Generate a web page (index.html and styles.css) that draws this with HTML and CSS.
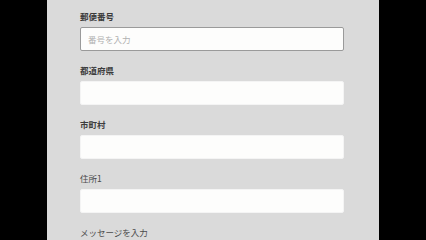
FILE: index.html
```html
<!DOCTYPE html>
<html lang="ja">
<head>
    <meta charset="UTF-8">
    <meta name="viewport" content="width=device-width, initial-scale=1.0">
    <title>住所入力</title>
    <link rel="stylesheet" href="styles.css">
</head>
<body>
    <form class="address-form">
        <div class="field">
            <label for="zip" class="field-label strong">郵便番号</label>
            <input type="text" id="zip" class="field-input focused" placeholder="番号を入力">
        </div>
        <div class="field">
            <label for="pref" class="field-label strong">都道府県</label>
            <input type="text" id="pref" class="field-input">
        </div>
        <div class="field">
            <label for="city" class="field-label strong">市町村</label>
            <input type="text" id="city" class="field-input">
        </div>
        <div class="field">
            <label for="addr1" class="field-label">住所1</label>
            <input type="text" id="addr1" class="field-input">
        </div>
        <div class="field">
            <label for="message" class="field-label">メッセージを入力</label>
            <input type="text" id="message" class="field-input">
        </div>
    </form>
</body>
</html>
```

FILE: styles.css
```css
html, body {
    margin: 0;
    height: 100%;
    overflow: hidden;
    background-color: #000;
}

.address-form {
    width: 332px;
    height: 100%;
    margin: 0 auto;
    padding: 10px 35px 0 33px;
    box-sizing: border-box;
    background-color: #dadada;
    display: flex;
    flex-direction: column;
    gap: 13px;
    font-family: "Noto Sans CJK JP", "Noto Sans", sans-serif;
}

.field {
    display: flex;
    flex-direction: column;
    gap: 5px;
}

.field-label {
    font-size: 8.5px;
    line-height: 12px;
    color: #4a4a4a;
}

.field-label.strong {
    font-weight: bold;
    color: #3c3c3c;
}

.field-input {
    height: 24px;
    width: 100%;
    box-sizing: border-box;
    margin: 0;
    padding: 0 7px;
    border: 1px solid #f4f4f4;
    border-radius: 2px;
    background-color: #fdfdfc;
    font-family: "Noto Sans CJK JP", "Noto Sans", sans-serif;
    font-size: 8.5px;
    color: #333;
    outline: none;
}

.field-input.focused {
    border-color: #9a9a9a;
}

.field-input::placeholder {
    color: #b0b0b0;
}
```
